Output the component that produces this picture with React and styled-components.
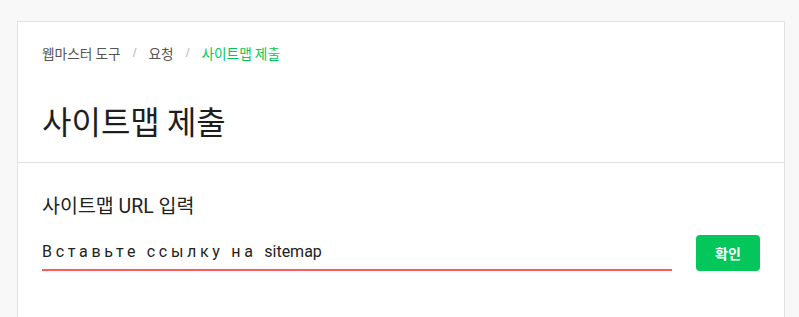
import React from 'react';
import styled, { createGlobalStyle } from 'styled-components';

const GlobalStyle = createGlobalStyle`
  body {
    margin: 0;
    background: #f8f8f8;
    font-family: "Noto Sans CJK KR", "Noto Sans", sans-serif;
    color: #222;
  }
`;

const Page = styled.div`
  padding: 21px 14px 0 17px;
`;

const Card = styled.div`
  background: #fff;
  border: 1px solid #e2e2e2;
  border-bottom: none;
  min-height: 300px;
`;

const Header = styled.div`
  padding: 20px 24px 20px;
  border-bottom: 1px solid #e2e2e2;
`;

const Breadcrumb = styled.nav`
  display: flex;
  align-items: center;
  font-size: 13.7px;
  line-height: 22px;
`;

const Crumb = styled.span`
  color: ${props => (props.active ? '#03c75a' : '#555')};
`;

const Sep = styled.span`
  color: #bbb;
  margin: 0 12px;
  font-family: "Liberation Sans", sans-serif;
`;

const Title = styled.h1`
  margin: 34px 0 0;
  font-size: 32px;
  font-weight: 400;
  line-height: 44px;
  color: #1e1e1e;
`;

const Body = styled.div`
  padding: 30px 24px;
`;

const Label = styled.h2`
  margin: 0;
  font-size: 19.5px;
  font-weight: 400;
  line-height: 28px;
  color: #222;
  font-family: "Roboto", "Noto Sans CJK KR", sans-serif;
`;

const Row = styled.div`
  display: flex;
  align-items: flex-end;
  gap: 24px;
  margin-top: 14px;
`;

const Field = styled.div`
  flex: 1;
  border-bottom: 2px solid #ff5a5f;
  padding-bottom: 6px;
  font-size: 16px;
  line-height: 22px;
  color: #222;
  font-family: "Roboto", "Noto Sans", sans-serif;
`;

const Spaced = styled.span`
  letter-spacing: 3.7px;
`;

const Button = styled.button`
  width: 64px;
  height: 36px;
  border: none;
  border-radius: 4px;
  background: #03c75a;
  color: #fff;
  font-family: "Noto Sans CJK KR", sans-serif;
  font-size: 14px;
  font-weight: 700;
  cursor: pointer;
`;

export default function App() {
  return (
    <>
      <GlobalStyle />
      <Page>
        <Card>
          <Header>
            <Breadcrumb>
              <Crumb>웹마스터 도구</Crumb>
              <Sep>/</Sep>
              <Crumb>요청</Crumb>
              <Sep>/</Sep>
              <Crumb active>사이트맵 제출</Crumb>
            </Breadcrumb>
            <Title>사이트맵 제출</Title>
          </Header>
          <Body>
            <Label>사이트맵 URL 입력</Label>
            <Row>
              <Field>
                <Spaced>Вставьте ссылку на </Spaced>sitemap
              </Field>
              <Button>확인</Button>
            </Row>
          </Body>
        </Card>
      </Page>
    </>
  );
}
